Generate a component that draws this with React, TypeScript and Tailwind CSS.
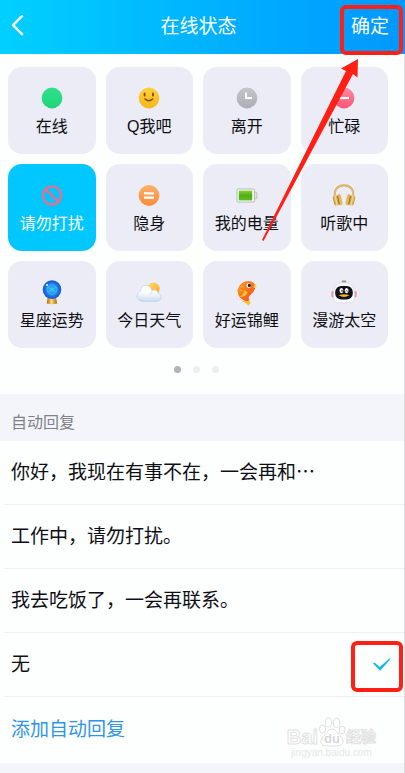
import { useState } from 'react';
import type { ReactNode } from 'react';

interface Status {
    id: string;
    label: string;
    icon: ReactNode;
}

// ── Status icons, all on a 24x24 grid ──
const onlineIcon = (
    <>
        <linearGradient id="online" x1="0" y1="0" x2="0" y2="1">
            <stop offset="0" stopColor="#2fe08c" />
            <stop offset="1" stopColor="#1fd47a" />
        </linearGradient>
        <circle cx="12" cy="11" r="10.4" fill="url(#online)" />
    </>
);

const smileIcon = (
    <>
        <linearGradient id="smile" x1="0" y1="0" x2="0" y2="1">
            <stop offset="0" stopColor="#fbd23c" />
            <stop offset="1" stopColor="#f9b51c" />
        </linearGradient>
        <circle cx="12" cy="11" r="10.4" fill="url(#smile)" />
        <g fill="none" stroke="#80480a" strokeWidth="1.8" strokeLinecap="round">
            <path d="M7.6 6.4v2.2M16 6.4v2.2" />
            <path d="M8 12q3.8 3.4 7.6 0" strokeWidth="1.5" />
        </g>
    </>
);

const awayIcon = (
    <>
        <linearGradient id="away" x1="0" y1="0" x2="0" y2="1">
            <stop offset="0" stopColor="#c3c4cc" />
            <stop offset="1" stopColor="#acadb5" />
        </linearGradient>
        <circle cx="12" cy="11" r="10.4" fill="url(#away)" />
        <path d="M11 5.5V11h6" fill="none" stroke="#fff" strokeWidth="2" />
    </>
);

const busyIcon = (
    <>
        <linearGradient id="busy" x1="0" y1="0" x2="0" y2="1">
            <stop offset="0" stopColor="#ff8ba0" />
            <stop offset="1" stopColor="#fb5575" />
        </linearGradient>
        <circle cx="12" cy="11" r="10.4" fill="url(#busy)" />
        <path d="M7 11h10" stroke="#fff" strokeWidth="2.2" />
    </>
);

const banIcon = (
    <g fill="none" stroke="#ec6c8e" strokeWidth="2.4">
        <circle cx="12" cy="11.5" r="9.1" />
        <path d="M5.6 5.1l12.8 12.8" />
    </g>
);

const hiddenIcon = (
    <>
        <linearGradient id="hidden" x1="0" y1="0" x2="0" y2="1">
            <stop offset="0" stopColor="#fdb069" />
            <stop offset="1" stopColor="#f98b3c" />
        </linearGradient>
        <circle cx="12" cy="11.5" r="10.4" fill="url(#hidden)" />
        <path d="M7 9.3h10M7 13.7h10" stroke="#fff" strokeWidth="2.2" />
    </>
);

const batteryIcon = (
    <>
        <linearGradient id="battery" x1="0" y1="0" x2="0" y2="1">
            <stop offset="0" stopColor="#86cf3a" />
            <stop offset="0.5" stopColor="#4fae12" />
            <stop offset="1" stopColor="#5fc01c" />
        </linearGradient>
        <rect x="19.4" y="8.2" width="2.4" height="6.4" rx="1" fill="#e8ebe4" stroke="#a9b0a4" strokeWidth="0.7" />
        <rect x="2" y="5" width="17.6" height="13" rx="1.4" fill="#f7f9f4" stroke="#a9b0a4" strokeWidth="0.8" />
        <rect x="3.8" y="6.6" width="13.4" height="9.8" fill="url(#battery)" />
    </>
);

const headphonesIcon = (
    <>
        <linearGradient id="gold" x1="0" y1="0" x2="1" y2="0">
            <stop offset="0" stopColor="#b87f27" />
            <stop offset="0.5" stopColor="#f6dc8b" />
            <stop offset="1" stopColor="#c08a2e" />
        </linearGradient>
        <path d="M3.2 13C1.4 5.6 6.2 1.2 12 1.2S22.6 5.6 20.8 13" fill="none" stroke="#cf9f42" strokeWidth="1.9" />
        <path d="M3.4 11.5C2 5.6 6.6 1 12 1s10 4.600 8.600 10.500" fill="none" stroke="#f3dc95" strokeWidth="0.7" />
        <g transform="rotate(-12 5 16)">
            <rect x="1.4" y="11" width="5" height="10.6" rx="2.5" fill="url(#gold)" />
            <rect x="5.8" y="10.6" width="4" height="11.4" rx="2" fill="#e2b95c" />
            <path d="M6.4 12v8.6" stroke="#8d5d16" strokeWidth="0.8" />
        </g>
        <g transform="rotate(12 19 16)">
            <rect x="17.6" y="11" width="5" height="10.6" rx="2.5" fill="url(#gold)" />
            <rect x="14.2" y="10.6" width="4" height="11.4" rx="2" fill="#e2b95c" />
            <path d="M17.6 12v8.6" stroke="#8d5d16" strokeWidth="0.8" />
        </g>
    </>
);

const crystalIcon = (
    <>
        <radialGradient id="crystal" cx="0.5" cy="0.5" r="0.5">
            <stop offset="0" stopColor="#2fc3f0" />
            <stop offset="0.55" stopColor="#1f8df0" />
            <stop offset="1" stopColor="#174fd2" />
        </radialGradient>
        <linearGradient id="stand" x1="0" y1="0" x2="1" y2="0">
            <stop offset="0" stopColor="#a5640f" />
            <stop offset="0.45" stopColor="#fbdc7c" />
            <stop offset="1" stopColor="#a8670f" />
        </linearGradient>
        <path d="M7.6 16.500h8.400l1.200 6q-5.200 1.600-10.400 0z" fill="url(#stand)" />
        <circle cx="12" cy="8.6" r="9.3" fill="url(#crystal)" />
        <path d="M12 3.400l4.400 2.600v5.200L12 13.800l-4.400-2.600V6zM7.600 6l8.800 5.200M16.400 6l-8.800 5.200" fill="none" stroke="#5fd0f5" strokeWidth="0.5" />
        <circle cx="7" cy="4" r="1.1" fill="#d9f4ff" />
    </>
);

const weatherIcon = (
    <>
        <linearGradient id="sun" x1="0" y1="0" x2="1" y2="1">
            <stop offset="0" stopColor="#ffe06a" />
            <stop offset="1" stopColor="#fba51d" />
        </linearGradient>
        <linearGradient id="cloud" x1="0" y1="0" x2="0" y2="1">
            <stop offset="0.4" stopColor="#fff" />
            <stop offset="1" stopColor="#c9dbf0" />
        </linearGradient>
        <circle cx="16.4" cy="7.8" r="6.2" fill="url(#sun)" />
        <path
            d="M5.8 20.400C2 20.400 0 18 0 15.200c0-2.600 1.700-4.400 3.400-4.800C3.800 6.800 6.200 4.400 9.200 4.400c3 0 5.200 2.200 5.600 5.200 1.200-.7 2.600-.9 3.800-.4 1.400.5 2.200 1.600 2.400 3 2 .6 3 2 3 3.800 0 2.600-1.800 4.400-4.800 4.400z"
            fill="url(#cloud)"
            stroke="#bccde4"
            strokeWidth="0.6"
        />
        <path d="M14.800 9.600q.3 2.500-1.400 4.200" fill="none" stroke="#c9d9ed" strokeWidth="0.7" />
    </>
);

const koiIcon = (
    <>
        <linearGradient id="koi" x1="0" y1="0" x2="1" y2="1">
            <stop offset="0" stopColor="#fba024" />
            <stop offset="0.6" stopColor="#f66a1c" />
            <stop offset="1" stopColor="#ee4718" />
        </linearGradient>
        <path d="M12 18.500q-2.500 1.500-5 1.700 3.800.8 6.600 4.600.6-1.800 2.200-2.800-1.600-1.200-1.600-3.500z" fill="#fdbf28" />
        <path d="M5 6L1.800 9.400l2.400 5.200z" fill="#fdc62f" />
        <path d="M21 4.800C18.800.6 14.400-.8 10.400.6 5 2.400 2.200 7 3 12c.7 4.400 3.800 7.200 8.600 8.200l2.800-1c-1.400-2.400-.6-4.200 1.400-5.800 2.400-1.800 4-4 5.200-8.600z" fill="url(#koi)" />
        <path d="M19.600 3.400c1.500.3 2.200 1.200 2 2.200-.2 1.200-1.600 1.600-3.200 1.200z" fill="#ffd24a" />
        <path d="M9.400 9q-.4 4.600-4.800 6.800 6.200.2 8-4.200z" fill="#fdc62f" />
        <path d="M5.600 5.800q2-.6 3.600.9M4.600 9.400q1.500-.5 3 .6" fill="none" stroke="#ffc043" strokeWidth="0.7" />
        <circle cx="13.800" cy="4.600" r="2.300" fill="#fff" />
        <circle cx="14.400" cy="4.400" r="1.600" fill="#222" />
    </>
);

const spaceIcon = (
    <>
        <rect x="-0.6" y="10" width="3.4" height="6.500" rx="1.4" fill="#e596ac" />
        <rect x="21.2" y="10" width="3.4" height="6.500" rx="1.4" fill="#e596ac" />
        <rect x="9.8" y="-0.4" width="4.4" height="2.6" rx="0.8" fill="#8d9283" />
        <path d="M1.400 13.500C1.400 5.800 5.600 1.400 12 1.400S22.600 5.800 22.600 13.500c0 2.600-.3 4.800-1.200 6.600-.5 1.200-1.500 1.700-2.800 1.700H5.400c-1.300 0-2.300-.5-2.800-1.700-.9-1.800-1.200-4-1.200-6.600z" fill="#fbfcfe" stroke="#cfd6e2" strokeWidth="0.6" />
        <rect x="3.200" y="5" width="17.600" height="13.400" rx="6" fill="#10131c" />
        <ellipse cx="9.400" cy="9.600" rx="1.900" ry="2.600" fill="#fff" />
        <ellipse cx="14.600" cy="9.600" rx="1.900" ry="2.600" fill="#fff" />
        <ellipse cx="10" cy="9.800" rx="0.7" ry="1.100" fill="#111" />
        <path d="M13.700 10.200q.9-1.200 1.800 0" fill="none" stroke="#111" strokeWidth="0.8" />
        <path d="M6.600 14.200q5.400-1.800 10.800 0-5.400 3.600-10.800 0z" fill="#fbb61e" />
    </>
);

const STATUSES: Status[] = [
    { id: 'online', label: '在线', icon: onlineIcon },
    { id: 'qme', label: 'Q我吧', icon: smileIcon },
    { id: 'away', label: '离开', icon: awayIcon },
    { id: 'busy', label: '忙碌', icon: busyIcon },
    { id: 'dnd', label: '请勿打扰', icon: banIcon },
    { id: 'hidden', label: '隐身', icon: hiddenIcon },
    { id: 'battery', label: '我的电量', icon: batteryIcon },
    { id: 'music', label: '听歌中', icon: headphonesIcon },
    { id: 'horoscope', label: '星座运势', icon: crystalIcon },
    { id: 'weather', label: '今日天气', icon: weatherIcon },
    { id: 'koi', label: '好运锦鲤', icon: koiIcon },
    { id: 'space', label: '漫游太空', icon: spaceIcon },
];

const REPLIES = ['你好，我现在有事不在，一会再和⋯', '工作中，请勿打扰。', '我去吃饭了，一会再联系。', '无'];

function Watermark() {
    return (
        <div aria-hidden="true" className="absolute right-7 top-5 flex flex-col items-center font-bold text-white pointer-events-none">
            <div className="flex items-end leading-5">
                <span className="text-xl leading-5 [-webkit-text-stroke:1px_#e2e2e2]">Bai</span>
                <svg viewBox="0 0 28 30" className="w-7 h-[30px]" fill="#fff" stroke="#dedede" strokeWidth="1">
                    <ellipse cx="4.500" cy="12" rx="3" ry="4" />
                    <ellipse cx="10.500" cy="5.500" rx="3.200" ry="4.500" />
                    <ellipse cx="18.500" cy="6" rx="3.200" ry="4.500" />
                    <ellipse cx="24" cy="13" rx="3" ry="4" />
                    <path d="M14 12c3.500 0 4.500 3 7 5.500 3.500 3.300 5 6 3.500 9-1.500 2.800-5 2.500-10.500 2.500S5 29.300 3.500 26.500C2 23.500 3.500 20.800 7 17.500 9.500 15 10.500 12 14 12z" />
                    <text x="14" y="26" textAnchor="middle" fontSize="13" fill="#d9d9d9" stroke="none">du</text>
                </svg>
                <span className="text-[15px] leading-5 [-webkit-text-stroke:1px_#e2e2e2]">经验</span>
            </div>
            <span className="text-[10px] leading-3 text-[#e6e6e6] font-normal">jingyan.baidu.com</span>
        </div>
    );
}

export default function App() {
    const [status, setStatus] = useState('dnd');
    const [reply, setReply] = useState('无');

    return (
        <div className="min-h-screen flex flex-col bg-[#fdfefe] text-[#0e0e14] font-['Liberation_Sans','Noto_Sans_CJK_SC',sans-serif]">
            {/* ── Header ── */}
            <header className="relative grid grid-cols-[1fr_auto_1fr] items-center h-[54px] pl-2 pr-4 bg-linear-to-r from-[#00d0ff] via-[#00b3ff] to-[#0098ff] text-white text-[19px] leading-6">
                <button type="button" aria-label="返回" className="justify-self-start">
                    <svg viewBox="0 0 20 24" className="w-5 h-6" fill="none" stroke="currentColor" strokeWidth="2.4" strokeLinecap="round" strokeLinejoin="round">
                        <path d="M14 1.200L5 10.200l9 9" />
                    </svg>
                </button>
                <h1>在线状态</h1>
                <button type="button" className="justify-self-end">确定</button>

                {/* callout and arrow pointing at the confirm button */}
                <div className="absolute right-0.5 top-[5px] w-[63px] h-[50px] border-4 border-[#ff1f14] rounded-md pointer-events-none" />
                <svg viewBox="0 0 100 184" className="absolute z-10 right-11 top-[58px] w-[100px] h-[184px] pointer-events-none" fill="#ff1f14">
                    <path d="M97 1L80 10.500l5 2.500L1 182l1.500 1L92 16l4.500 3.500z" />
                </svg>
            </header>

            {/* ── Status grid ── */}
            <main className="flex-1 flex flex-col border-r border-[#dcdde0]">
                <div className="grid grid-cols-4 gap-2.5 pt-[13px] pl-2 pr-4">
                    {STATUSES.map(s => (
                        <button
                            key={s.id}
                            type="button"
                            aria-pressed={status === s.id}
                            onClick={() => setStatus(s.id)}
                            className={`flex flex-col items-center gap-1 h-[87px] pt-5 rounded-[14px] text-base leading-6 ${
                                status === s.id ? 'bg-[#00c8ff] text-white' : 'bg-[#ebecf5]'
                            }`}
                        >
                            <svg viewBox="0 0 24 24" className="size-6 overflow-visible">{s.icon}</svg>
                            {s.label}
                        </button>
                    ))}
                </div>

                <div className="flex justify-center gap-3 pt-[18px] pb-[21px] pr-3">
                    <span className="size-[7px] rounded-full bg-[#b3b4b9]" />
                    <span className="size-[7px] rounded-full bg-[#eeeef1]" />
                    <span className="size-[7px] rounded-full bg-[#eeeef1]" />
                </div>

                {/* ── Auto reply ── */}
                <h2 id="auto-reply" className="h-[47px] pt-[17px] px-[11px] bg-[#f4f5fa] text-[#808188] text-base leading-6">自动回复</h2>
                <div role="radiogroup" aria-labelledby="auto-reply" className="text-[19px] leading-6">
                    {REPLIES.map(r => (
                        <label key={r} className="relative flex items-center justify-between h-16 pl-[11px] pr-3 cursor-pointer">
                            <span>{r}</span>
                            <input
                                type="radio"
                                name="reply"
                                value={r}
                                checked={reply === r}
                                onChange={() => setReply(r)}
                                className="peer appearance-none size-0"
                            />
                            <svg viewBox="0 0 20 16" className="hidden peer-checked:block w-5 h-4" fill="#12b7ee">
                                <path d="M1 6.500l1.400-1 5.400 4.400L17.600 1.200l.9.700L8.200 13.800z" />
                            </svg>
                            <span className="absolute left-1 right-0 bottom-0 h-px bg-[#eff0f2]" />
                            {r === '无' && (
                                <span className="absolute right-px top-2 w-[52px] h-[51px] border-4 border-[#ff1f14] rounded-md pointer-events-none" />
                            )}
                        </label>
                    ))}
                </div>
                <div className="relative h-[66px] pl-[11px] flex items-center text-[19px] leading-6">
                    <button type="button" className="text-[#3095e8]">添加自动回复</button>
                    <Watermark />
                </div>
                <div className="flex-1 min-h-2 bg-[#f4f5fa]" />
            </main>
        </div>
    );
}
